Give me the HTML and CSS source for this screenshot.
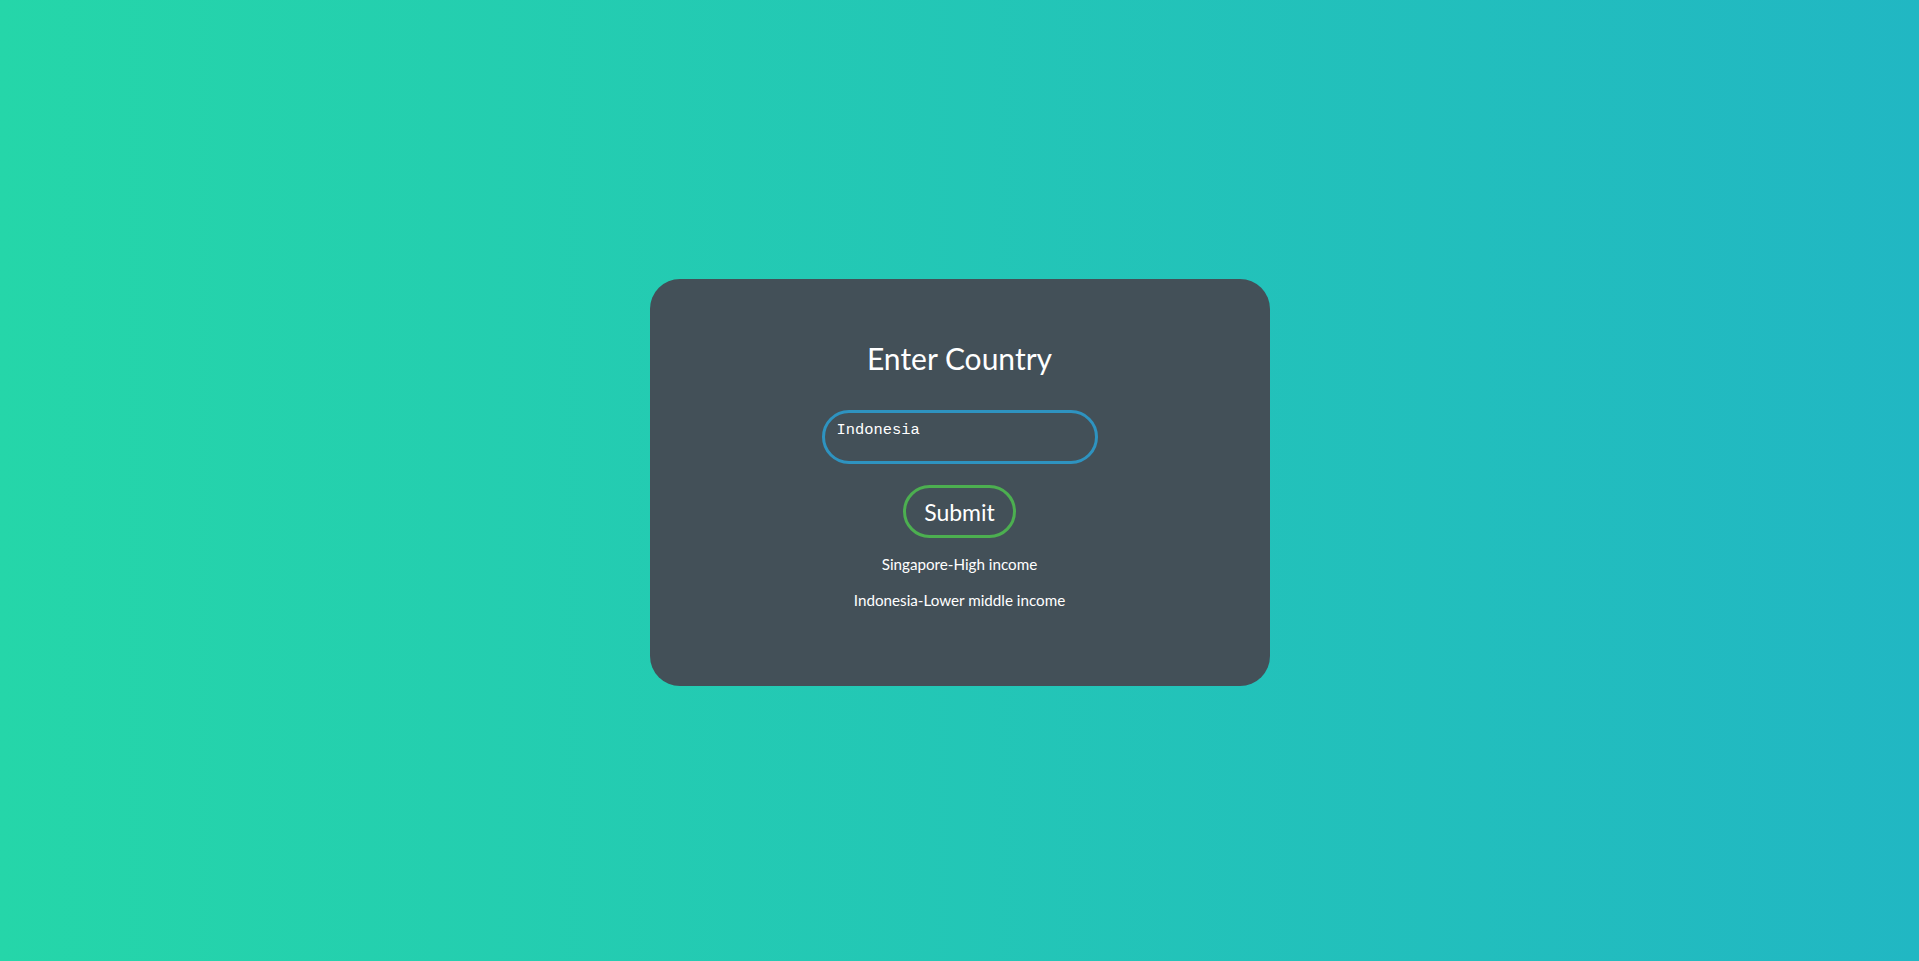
FILE: index.html
```html
<!DOCTYPE html>
<html lang="en">
<head>
<meta charset="utf-8">
<title>Enter Country</title>
<link rel="stylesheet" href="styles.css">
</head>
<body>
<main class="page">
  <section class="card">
    <h1 class="title">Enter Country</h1>
    <textarea class="country-input">Indonesia</textarea>
    <button class="submit" type="button">Submit</button>
    <ul class="results">
      <li>Singapore-High income</li>
      <li>Indonesia-Lower middle income</li>
    </ul>
  </section>
</main>
</body>
</html>
```
FILE: styles.css
```css
* { box-sizing: border-box; }
html, body { margin: 0; height: 100%; }
body {
  background: linear-gradient(to right, #25d6a9, #21b7c3);
  font-family: Lato, "Noto Sans", sans-serif;
  color: #ffffff;
}
.page {
  height: 100%;
  display: flex;
  align-items: center;
  justify-content: center;
}
.card {
  width: 620px;
  height: 407px;
  margin-top: 4px;
  background: #435058;
  border-radius: 30px;
  display: flex;
  flex-direction: column;
  align-items: center;
  padding-top: 61px;
}
.title {
  margin: 0;
  font-size: 30px;
  font-weight: 400;
  line-height: 36px;
}
.country-input {
  margin-top: 34px;
  width: 276px;
  height: 54px;
  border: 3px solid #2e93c0;
  border-radius: 27px;
  background: transparent;
  color: #ffffff;
  font-family: "Liberation Mono", monospace;
  font-size: 15.4px;
  padding: 8px 12px;
  resize: none;
  outline: none;
  overflow: hidden;
}
.submit {
  margin-top: 21px;
  width: 113px;
  height: 53px;
  border: 3px solid #4caf50;
  border-radius: 27px;
  background: transparent;
  color: #ffffff;
  font-family: Lato, "Noto Sans", sans-serif;
  font-size: 23px;
  padding: 0;
}
.results {
  list-style: none;
  margin: 15px 0 0;
  padding: 0;
  text-align: center;
  font-size: 15.2px;
}
.results li {
  line-height: 22px;
  margin-bottom: 14px;
}
```
